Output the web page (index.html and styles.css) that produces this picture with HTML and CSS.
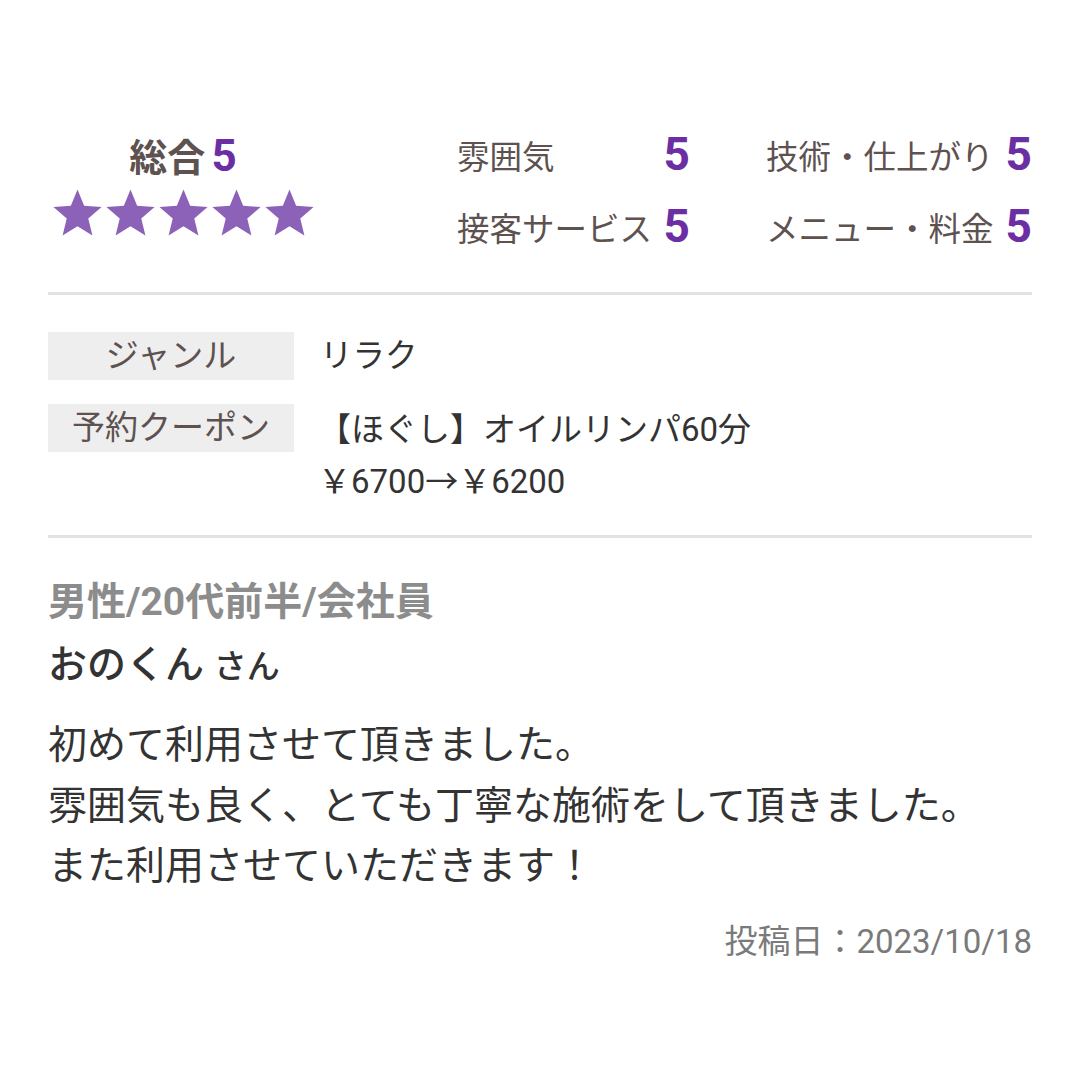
FILE: index.html
```html
<!DOCTYPE html>
<html lang="ja">
<head>
<meta charset="utf-8">
<link rel="stylesheet" href="styles.css">
</head>
<body>
<div class="page">
  <section class="scores">
    <div class="total">
      <div class="total-title">総合<span class="num">5</span></div>
      <div class="stars">
        <svg viewBox="0 0 24 24"><polygon points="12,1.5 14.9,8.6 22.5,9.2 16.7,14.2 18.5,21.6 12,17.6 5.5,21.6 7.3,14.2 1.5,9.2 9.1,8.6"/></svg>
        <svg viewBox="0 0 24 24"><polygon points="12,1.5 14.9,8.6 22.5,9.2 16.7,14.2 18.5,21.6 12,17.6 5.5,21.6 7.3,14.2 1.5,9.2 9.1,8.6"/></svg>
        <svg viewBox="0 0 24 24"><polygon points="12,1.5 14.9,8.6 22.5,9.2 16.7,14.2 18.5,21.6 12,17.6 5.5,21.6 7.3,14.2 1.5,9.2 9.1,8.6"/></svg>
        <svg viewBox="0 0 24 24"><polygon points="12,1.5 14.9,8.6 22.5,9.2 16.7,14.2 18.5,21.6 12,17.6 5.5,21.6 7.3,14.2 1.5,9.2 9.1,8.6"/></svg>
        <svg viewBox="0 0 24 24"><polygon points="12,1.5 14.9,8.6 22.5,9.2 16.7,14.2 18.5,21.6 12,17.6 5.5,21.6 7.3,14.2 1.5,9.2 9.1,8.6"/></svg>
      </div>
    </div>
    <div class="items">
      <div class="item"><span class="label">雰囲気</span><span class="num">5</span></div>
      <div class="item"><span class="label">技術・仕上がり</span><span class="num">5</span></div>
      <div class="item"><span class="label">接客サービス</span><span class="num">5</span></div>
      <div class="item"><span class="label">メニュー・料金</span><span class="num">5</span></div>
    </div>
  </section>
  <hr class="divider">
  <section class="info">
    <div class="row">
      <div class="key">ジャンル</div>
      <div class="val">リラク</div>
    </div>
    <div class="row">
      <div class="key">予約クーポン</div>
      <div class="val coupon">【ほぐし】オイルリンパ60分<br>￥6700→￥6200</div>
    </div>
  </section>
  <hr class="divider">
  <section class="review">
    <div class="profile">男性/20代前半/会社員</div>
    <div class="name">おのくん <span class="san">さん</span></div>
    <p class="body">初めて利用させて頂きました。<br>雰囲気も良く、とても丁寧な施術をして頂きました。<br>また利用させていただきます！</p>
    <div class="date">投稿日：2023/10/18</div>
  </section>
</div>
</body>
</html>
```

FILE: styles.css
```css
* { box-sizing: border-box; }
html, body {
  margin: 0;
  padding: 0;
  background: #fff;
}
body {
  font-family: Roboto, "Noto Sans CJK JP", sans-serif;
  color: #333;
}
.page {
  width: 1080px;
  padding: 128px 48px 0 48px;
}
.scores {
  display: flex;
  align-items: flex-start;
  height: 140px;
}
.total {
  width: 270px;
  display: flex;
  flex-direction: column;
  align-items: center;
}
.total-title {
  font-size: 38px;
  font-weight: 700;
  color: #5e5251;
  line-height: 56px;
}
.num {
  color: #6c2fa3;
  font-weight: 700;
  font-family: Roboto, sans-serif;
}
.total-title .num {
  margin-left: 6px;
  font-size: 44px;
}
.stars {
  display: flex;
  margin-top: 0;
}
.stars svg {
  width: 55px;
  height: 55px;
  margin: 0 -1px;
  fill: #8c62b8;
}
.items {
  margin-left: 139px;
  display: grid;
  grid-template-columns: 233px 266px;
  column-gap: 76px;
  row-gap: 20px;
}
.item {
  display: flex;
  justify-content: space-between;
  align-items: center;
  height: 52px;
}
.item .label {
  font-size: 32.5px;
  color: #5e5251;
  font-weight: 400;
}
.item .num {
  font-size: 46px;
}
.divider {
  border: none;
  height: 3px;
  background: #e2e2e2;
  margin: 24px 0 0 0;
}
.info {
  padding: 37px 0 27px;
}
.row {
  display: flex;
  align-items: flex-start;
  margin-bottom: 24px;
}
.row:last-child { margin-bottom: 0; }
.key {
  width: 246px;
  height: 48px;
  background: #eeeeee;
  color: #5e5251;
  font-size: 33px;
  line-height: 48px;
  text-align: center;
  flex-shrink: 0;
}
.val {
  margin-left: 26px;
  font-size: 32.5px;
  line-height: 48px;
  color: #333;
}
.val.coupon {
  line-height: 52px;
  margin-left: 24px;
  font-size: 33px;
}
.info + .divider { margin-top: 0; }
.review {
  padding-top: 38px;
}
.profile {
  font-size: 39px;
  font-weight: 700;
  color: #8c8c8c;
  line-height: 52px;
}
.name {
  font-size: 39px;
  color: #333;
  line-height: 62px;
  margin-top: 6px;
  font-weight: 500;
}
.name .san {
  font-size: 33px;
}
.body {
  margin: 17px 0 0 0;
  font-size: 39px;
  line-height: 60.5px;
  color: #333;
}
.date {
  text-align: right;
  font-size: 33px;
  color: #7a7a7a;
  margin-top: 23px;
  line-height: 44px;
}
```
